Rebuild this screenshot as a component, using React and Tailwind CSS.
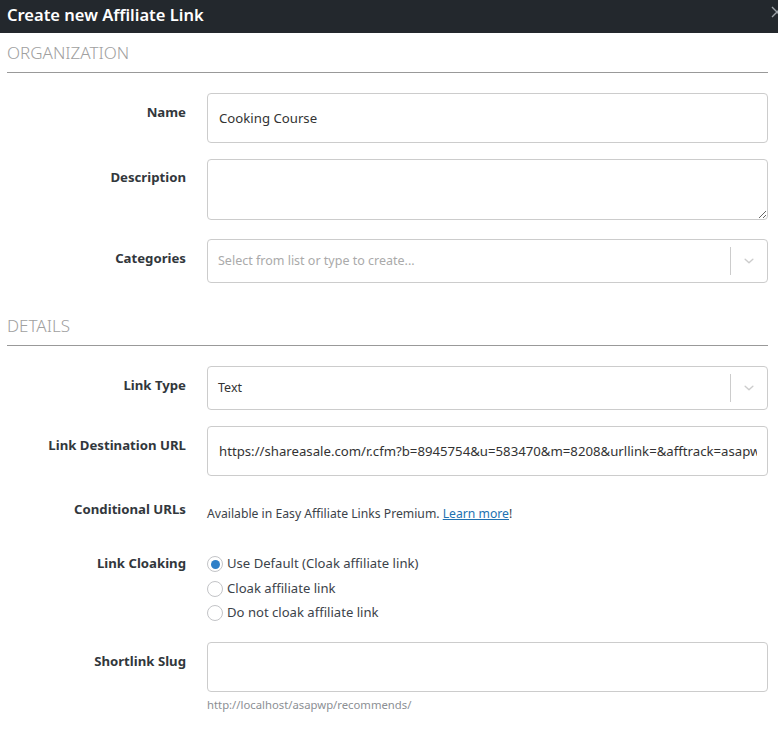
import React from "react";

const font = { fontFamily: '"Noto Sans", "Open Sans", Arial, sans-serif' };

function Chevron() {
  return (
    <svg width="14" height="14" viewBox="0 0 20 20" className="text-[#cccccc]">
      <path d="M4.5 7.5 L10 12.5 L15.5 7.5" fill="none" stroke="currentColor" strokeWidth="2" strokeLinecap="round" strokeLinejoin="round" />
    </svg>
  );
}

function SelectBox({ text, placeholder }) {
  return (
    <div className="flex h-[44px] items-center rounded-[4px] border border-[#cccccc] bg-white">
      <div className={`flex-1 pl-[10px] text-[12.5px] ${placeholder ? "text-[#aaaaaa]" : "text-[#333333]"}`}>
        {text}
      </div>
      <div className="h-[28px] w-px bg-[#cccccc]" />
      <div className="flex w-[36px] items-center justify-center">
        <Chevron />
      </div>
    </div>
  );
}

function Row({ label, children, labelPt = "pt-[9px]" }) {
  return (
    <div className="flex">
      <div className={`w-[179px] mr-[21px] shrink-0 text-right text-[13.2px] font-bold leading-5 text-[#32373c] ${labelPt}`}>
        {label}
      </div>
      <div className="flex-1 min-w-0">{children}</div>
    </div>
  );
}

function SectionHeader({ title }) {
  return (
    <div className="border-b border-[#999999] pb-[7px]">
      <div className="text-[17px] font-light leading-6 text-[#a0a0a0]">{title}</div>
    </div>
  );
}

function Radio({ checked, label }) {
  return (
    <label className="flex h-[24.5px] items-center text-[13.1px] text-[#3c434a]">
      <span className="mr-[4px] flex h-[16px] w-[16px] items-center justify-center rounded-full border border-[#c3c4c7] bg-white">
        {checked && <span className="h-[9px] w-[9px] rounded-full bg-[#2f80c8]" />}
      </span>
      {label}
    </label>
  );
}

export default function App() {
  return (
    <div style={font} className="relative h-[743px] w-[778px] overflow-hidden bg-white">
      <div className="relative flex h-[33px] items-center bg-[#23282d] pb-[3px] pl-[7px]">
        <div className="text-[16.5px] font-semibold text-white">Create new Affiliate Link</div>
        <svg className="absolute right-[-6px] top-[5px]" width="14" height="14" viewBox="0 0 14 14">
          <path d="M2 2 L12 12 M12 2 L2 12" stroke="#9ca2a7" strokeWidth="1.4" fill="none" />
        </svg>
      </div>

      <div className="pl-[7px] pr-[10px]">
        <div className="pt-[8px]">
          <SectionHeader title="ORGANIZATION" />
        </div>

        <div className="mt-[20px] flex flex-col gap-[16px]">
          <Row label="Name">
            <input
              readOnly
              value="Cooking Course"
              className="block h-[50px] w-full rounded-[4px] border border-[#cccccc] px-[11px] text-[13.2px] text-[#333333] outline-none"
            />
          </Row>
          <Row label="Description" labelPt="pt-[8px]">
            <textarea className="block h-[61px] w-full resize-y rounded-[4px] border border-[#cccccc] px-[11px] text-[13.2px] outline-none" />
          </Row>
          <div className="pt-[3px]">
            <Row label="Categories">
              <SelectBox placeholder text="Select from list or type to create..." />
            </Row>
          </div>
        </div>

        <div className="pt-[31px]">
          <SectionHeader title="DETAILS" />
        </div>

        <div className="mt-[20px] flex flex-col gap-[16px]">
          <Row label="Link Type">
            <SelectBox text="Text" />
          </Row>
          <Row label="Link Destination URL">
            <input
              readOnly
              value="https://shareasale.com/r.cfm?b=8945754&u=583470&m=8208&urllink=&afftrack=asapwp"
              className="block h-[50px] w-full rounded-[4px] border border-[#cccccc] pl-[11px] pr-[10px] text-[13.2px] text-[#333333] outline-none"
            />
          </Row>
          <div className="-mt-[2px]">
            <Row label="Conditional URLs">
              <div className="pt-[14px] text-[12.2px] leading-5 text-[#3c434a]">
                Available in Easy Affiliate Links Premium.{" "}
                <a className="text-[#2271b1] underline">Learn more</a>!
              </div>
            </Row>
          </div>
          <div className="mt-[4px]">
            <Row label="Link Cloaking">
              <div className="pt-[8px]">
                <Radio checked label="Use Default (Cloak affiliate link)" />
                <Radio label="Cloak affiliate link" />
                <Radio label="Do not cloak affiliate link" />
              </div>
            </Row>
          </div>
          <Row label="Shortlink Slug">
            <input className="block h-[50px] w-full rounded-[4px] border border-[#cccccc] px-[11px] text-[14px] outline-none" />
            <div className="mt-[5px] text-[11.3px] leading-4 text-[#8c8f94]">http://localhost/asapwp/recommends/</div>
          </Row>
        </div>
      </div>
    </div>
  );
}
